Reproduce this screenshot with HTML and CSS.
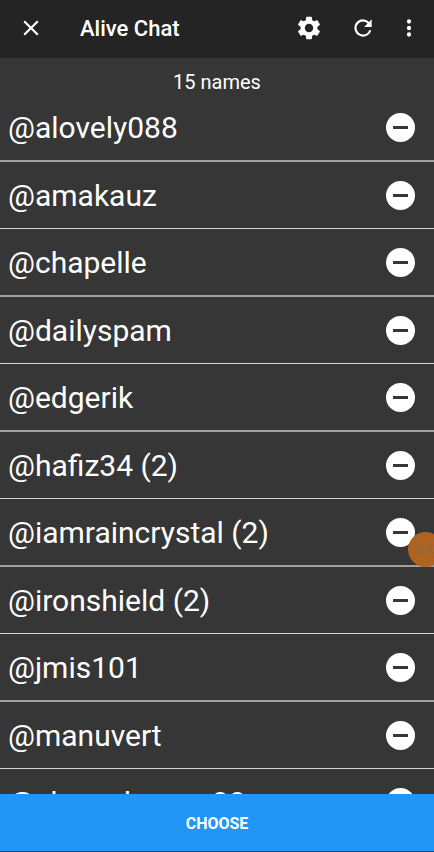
FILE: index.html
```html
<!DOCTYPE html>
<html lang="en">
<head>
<meta charset="utf-8">
<meta name="viewport" content="width=device-width, initial-scale=1">
<title>Alive Chat</title>
<link rel="stylesheet" href="styles.css">
</head>
<body>
<div class="app">
  <header class="bar">
    <button class="icon-btn" aria-label="Close"><svg viewBox="0 0 24 24"><path d="M19 6.41 17.59 5 12 10.59 6.41 5 5 6.41 10.59 12 5 17.59 6.41 19 12 13.41 17.59 19 19 17.59 13.41 12z"/></svg></button>
    <h1 class="title">Alive Chat</h1>
    <div class="actions">
      <button class="icon-btn settings" aria-label="Settings"><svg viewBox="0 0 24 24"><path d="M19.14 12.94c.04-.3.06-.61.06-.94 0-.32-.02-.64-.07-.94l2.03-1.58c.18-.14.23-.41.12-.61l-1.92-3.32c-.12-.22-.37-.29-.59-.22l-2.39.96c-.5-.38-1.03-.7-1.62-.94l-.36-2.54c-.04-.24-.24-.41-.48-.41h-3.84c-.24 0-.43.17-.47.41l-.36 2.54c-.59.24-1.13.57-1.62.94l-2.39-.96c-.22-.08-.47 0-.59.22L2.74 8.87c-.12.21-.08.47.12.61l2.03 1.58c-.05.3-.09.63-.09.94s.02.64.07.94l-2.03 1.58c-.18.14-.23.41-.12.61l1.92 3.32c.12.22.37.29.59.22l2.39-.96c.5.38 1.03.7 1.62.94l.36 2.54c.05.24.24.41.48.41h3.84c.24 0 .44-.17.47-.41l.36-2.54c.59-.24 1.13-.56 1.62-.94l2.39.96c.22.08.47 0 .59-.22l1.92-3.32c.12-.22.07-.47-.12-.61zM12 15.6A3.6 3.6 0 1 1 12 8.400a3.600 3.600 0 0 1 0 7.200z"/></svg></button>
      <button class="icon-btn" aria-label="Refresh"><svg viewBox="0 0 24 24"><path d="M17.65 6.35A7.958 7.958 0 0 0 12 4a8 8 0 1 0 7.730 10h-2.080A5.990 5.990 0 0 1 12 18a6 6 0 1 1 0-12c1.660 0 3.140.69 4.220 1.780L13 11h7V4z"/></svg></button>
      <button class="icon-btn more" aria-label="More options"><svg viewBox="0 0 24 24"><path d="M12 8a2 2 0 1 0 0-4 2 2 0 0 0 0 4zm0 2a2 2 0 1 0 0 4 2 2 0 0 0 0-4zm0 6a2 2 0 1 0 0 4 2 2 0 0 0 0-4z"/></svg></button>
    </div>
  </header>
  <main class="content">
    <p class="count">15 names</p>
    <ul class="names">
      <li><span>@alovely088</span><button class="remove" aria-label="Remove"></button></li>
      <li><span>@amakauz</span><button class="remove" aria-label="Remove"></button></li>
      <li><span>@chapelle</span><button class="remove" aria-label="Remove"></button></li>
      <li><span>@dailyspam</span><button class="remove" aria-label="Remove"></button></li>
      <li><span>@edgerik</span><button class="remove" aria-label="Remove"></button></li>
      <li><span>@hafiz34 (2)</span><button class="remove" aria-label="Remove"></button></li>
      <li><span>@iamraincrystal (2)</span><button class="remove" aria-label="Remove"></button></li>
      <li><span>@ironshield (2)</span><button class="remove" aria-label="Remove"></button></li>
      <li><span>@jmis101</span><button class="remove" aria-label="Remove"></button></li>
      <li><span>@manuvert</span><button class="remove" aria-label="Remove"></button></li>
      <li><span>@shervahraves88</span><button class="remove" aria-label="Remove"></button></li>
    </ul>
    <div class="bubble">0:00</div>
  </main>
  <button class="choose">CHOOSE</button>
</div>
</body>
</html>
```

FILE: styles.css
```css
* { box-sizing: border-box; }
body {
  margin: 0;
  background: #363636;
  color: #fff;
  font-family: Roboto, "Liberation Sans", sans-serif;
}
button {
  border: 0;
  padding: 0;
  background: none;
  color: inherit;
  font: inherit;
}
.app {
  display: flex;
  flex-direction: column;
  height: 100vh;
}
.bar {
  display: flex;
  align-items: center;
  flex: none;
  height: 58px;
  padding: 0 12px 2px 18px;
  background: #242424;
}
.icon-btn {
  display: block;
  width: 26px;
  height: 26px;
}
.icon-btn svg {
  display: block;
  width: 100%;
  height: 100%;
  fill: #fff;
}
.icon-btn.settings {
  width: 28px;
  height: 28px;
}
.title {
  margin: 0 0 0 36px;
  padding-top: 2px;
  font-size: 22px;
  line-height: 28px;
  font-weight: 500;
}
.actions {
  display: flex;
  align-items: center;
  gap: 27px;
  margin-left: auto;
}
.actions .more { margin-left: -7px; }
.content {
  position: relative;
  flex: 1;
  min-height: 0;
  overflow: hidden;
}
.count {
  margin: 0;
  padding-top: 12px;
  font-size: 20px;
  line-height: 24px;
  text-align: center;
}
.names {
  margin: 0;
  padding: 0;
  list-style: none;
}
.names li {
  display: flex;
  align-items: center;
  justify-content: space-between;
  box-sizing: content-box;
  height: 66px;
  padding: 0 19px 0 8px;
  border-bottom: 1px solid #d4d4d4;
  font-size: 30px;
  line-height: 36px;
}
.names li:nth-child(odd) { border-bottom: 2px solid #a0a0a0; }
.names span { padding-top: 2px; }
.remove {
  display: grid;
  place-items: center;
  width: 29px;
  height: 29px;
  border-radius: 50%;
  background: #fff;
}
.remove::before {
  content: "";
  width: 15px;
  height: 3px;
  background: #363636;
}
.bubble {
  position: absolute;
  top: 474px;
  right: -9px;
  width: 35px;
  height: 35px;
  border-radius: 50%;
  background: #af6321;
  color: #8b6848;
  font-size: 10px;
  line-height: 35px;
  text-align: center;
}
.choose {
  flex: none;
  height: 58px;
  padding-top: 2px;
  border-bottom: 1px solid #124b7c;
  background: #2296f6;
  font-size: 16px;
  font-weight: 700;
}
```
